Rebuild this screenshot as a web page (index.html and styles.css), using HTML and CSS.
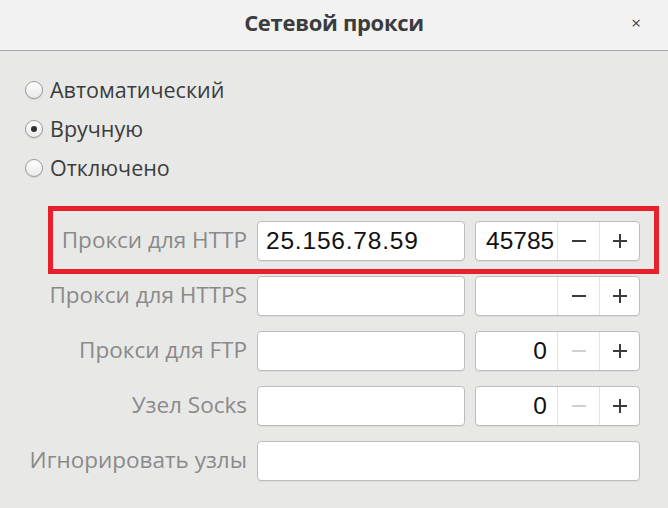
FILE: index.html
```html
<!DOCTYPE html>
<html lang="ru">
<head>
  <meta charset="UTF-8">
  <meta name="viewport" content="width=device-width, initial-scale=1.0">
  <title>Сетевой прокси</title>
  <link rel="stylesheet" href="styles.css">
</head>
<body>

  <div class="titlebar">
    <span class="title">Сетевой прокси</span>
    <span class="close">×</span>
  </div>

  <div class="content">
    <div class="modes">
      <label class="mode"><span class="radio"></span>Автоматический</label>
      <label class="mode"><span class="radio checked"></span>Вручную</label>
      <label class="mode"><span class="radio"></span>Отключено</label>
    </div>

    <div class="proxies">
      <div class="row marked">
        <span class="label">Прокси для HTTP</span>
        <div class="entry">25.156.78.59</div>
        <div class="spin">
          <div class="value">45785</div>
          <div class="btn"><svg viewBox="0 0 14 14"><path d="M0 7h14"/></svg></div>
          <div class="btn"><svg viewBox="0 0 14 14"><path d="M0 7h14M7 0v14"/></svg></div>
        </div>
      </div>

      <div class="row">
        <span class="label">Прокси для HTTPS</span>
        <div class="entry"></div>
        <div class="spin">
          <div class="value"></div>
          <div class="btn"><svg viewBox="0 0 14 14"><path d="M0 7h14"/></svg></div>
          <div class="btn"><svg viewBox="0 0 14 14"><path d="M0 7h14M7 0v14"/></svg></div>
        </div>
      </div>

      <div class="row">
        <span class="label">Прокси для FTP</span>
        <div class="entry"></div>
        <div class="spin">
          <div class="value">0</div>
          <div class="btn off"><svg viewBox="0 0 14 14"><path d="M0 7h14"/></svg></div>
          <div class="btn"><svg viewBox="0 0 14 14"><path d="M0 7h14M7 0v14"/></svg></div>
        </div>
      </div>

      <div class="row">
        <span class="label">Узел Socks</span>
        <div class="entry"></div>
        <div class="spin">
          <div class="value">0</div>
          <div class="btn off"><svg viewBox="0 0 14 14"><path d="M0 7h14"/></svg></div>
          <div class="btn"><svg viewBox="0 0 14 14"><path d="M0 7h14M7 0v14"/></svg></div>
        </div>
      </div>

      <div class="row wide">
        <span class="label">Игнорировать узлы</span>
        <div class="entry"></div>
      </div>
    </div>
  </div>

</body>
</html>
```

FILE: styles.css
```css
body {
  margin: 0;
  font-family: "Open Sans", "DejaVu Sans", sans-serif;
  background: #e8e8e7;
  color: #3c3c3c;
  width: 668px;
  height: 508px;
  overflow: hidden;
}

.titlebar {
  height: 50px;
  background: #f2f2f2;
  border-bottom: 1px solid #a8a8a8;
  display: flex;
  align-items: center;
  justify-content: center;
  position: relative;
}

.title {
  font-weight: bold;
  font-size: 22px;
  margin-top: -6px;
  letter-spacing: -0.3px;
}

.close {
  position: absolute;
  right: 27px;
  top: 11px;
  font-size: 17px;
  color: #444;
}

.content {
  padding-top: 19px;
}

/* radio buttons */
.modes {
  display: flex;
  flex-direction: column;
  padding-left: 25px;
}

.mode {
  display: flex;
  align-items: center;
  height: 39px;
  font-size: 21.5px;
  gap: 7px;
}

.radio {
  width: 16px;
  height: 16px;
  border-radius: 50%;
  border: 1px solid #9a9a9a;
  background: linear-gradient(to bottom, #ffffff, #e9e9e9);
  box-shadow: 0 1px 1px rgba(0,0,0,0.1);
  display: flex;
  align-items: center;
  justify-content: center;
}

.radio.checked::after {
  content: "";
  width: 6px;
  height: 6px;
  border-radius: 50%;
  background: #2f2f2f;
}

/* proxy rows */
.proxies {
  margin-top: 19px;
}

.row {
  display: grid;
  grid-template-columns: 1fr 208px 165px;
  column-gap: 10px;
  align-items: center;
  margin: 15px 28px 0 0;
  height: 40px;
}

.row.marked {
  border: 5px solid #e8202a;
  margin: 0 9px 0 48px;
  padding: 10px 14px 8px 0;
}

.row.marked + .row {
  margin-top: 2px;
}

.row.wide {
  grid-template-columns: 1fr 383px;
}

.label {
  text-align: right;
  font-size: 22.5px;
  color: #8a8a8a;
  white-space: nowrap;
  margin-top: -3px;
}

.entry,
.spin {
  height: 38px;
  background: #fff;
  border: 1px solid #bdbdbd;
  border-radius: 4px;
  box-shadow: 0 1px 0 rgba(0,0,0,0.05);
}

.entry {
  font-family: "Liberation Sans", Arial, sans-serif;
  font-size: 24.5px;
  letter-spacing: 0.8px;
  color: #111;
  line-height: 38px;
  padding-left: 8px;
}

.spin {
  display: grid;
  grid-template-columns: 1fr 42px 40px;
  overflow: hidden;
}

.value {
  font-family: "Liberation Sans", Arial, sans-serif;
  font-size: 24.5px;
  color: #111;
  line-height: 38px;
  text-align: right;
  padding: 0 10px;
  overflow: hidden;
  white-space: nowrap;
}

.btn {
  border-left: 1px solid #e2e2e2;
  display: flex;
  align-items: center;
  justify-content: center;
  color: #3a3a3a;
}

.btn svg {
  width: 14px;
  height: 14px;
  fill: none;
  stroke: currentColor;
  stroke-width: 2;
}

.btn.off {
  color: #d0d0d0;
}
```
